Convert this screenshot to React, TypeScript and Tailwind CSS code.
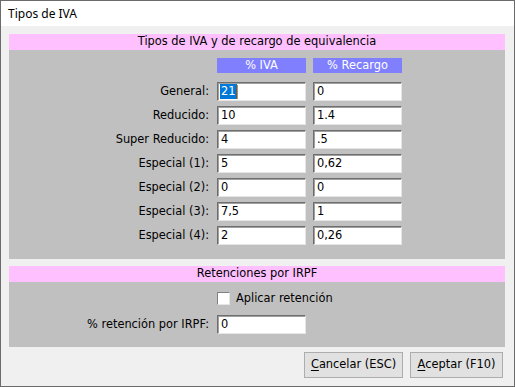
import React from "react";

const FONT = { fontFamily: '"DejaVu Sans", Verdana, sans-serif' };

const rows: { label: string; iva: string; rec: string }[] = [
  { label: "General:", iva: "21", rec: "0" },
  { label: "Reducido:", iva: "10", rec: "1.4" },
  { label: "Super Reducido:", iva: "4", rec: ".5" },
  { label: "Especial (1):", iva: "5", rec: "0,62" },
  { label: "Especial (2):", iva: "0", rec: "0" },
  { label: "Especial (3):", iva: "7,5", rec: "1" },
  { label: "Especial (4):", iva: "2", rec: "0,26" },
];

const Field = ({ value, selected }: { value: string; selected?: boolean }) => (
  <div className="flex h-[19px] w-[89px] items-center border border-b-[#e6e6e6] border-l-[#6e6e6e] border-r-[#e6e6e6] border-t-[#6e6e6e] bg-white pl-[2px] shadow-[inset_1px_1px_0_#a0a0a0] text-[11.4px] leading-none text-black">
    {selected ? (
      <>
        <span className="bg-[#0078d7] px-[1px] py-[2px] text-white">{value}</span>
        <span className="h-[14px] w-[1px] bg-[#ff7f00]" />
      </>
    ) : (
      <span className="pl-[1px]">{value}</span>
    )}
  </div>
);

const SectionTitle = ({ children }: { children: React.ReactNode }) => (
  <div className="flex h-[16px] items-center justify-center bg-[#ffc0ff] text-[11.4px] leading-none text-black">
    {children}
  </div>
);

const Button = ({ first, rest, w }: { first: string; rest: string; w: string }) => (
  <button
    className={`flex h-[26px] items-center justify-center border border-[#adadad] bg-[#e1e1e1] text-[11.4px] leading-none text-black ${w}`}
  >
    <span className="underline underline-offset-2">{first}</span>
    {rest}
  </button>
);

export default function App() {
  return (
    <div className="h-[387px] w-[515px] overflow-hidden" style={FONT}>
      <div className="flex h-full w-full flex-col border border-[#6b6b6b] bg-[#f0f0f0]">
        <div
          className="flex h-[25px] items-center bg-white pl-[7px] text-[12px] text-black"
          style={{ fontFamily: '"Noto Sans", "Open Sans", sans-serif' }}
        >
          Tipos de IVA
        </div>

        <div className="ml-[8px] mt-[8px] w-[496px]">
          <SectionTitle>Tipos de IVA y de recargo de equivalencia</SectionTitle>
          <div className="flex flex-col gap-[5px] bg-[#c0c0c0] pb-[14px] pt-[8px]">
            <div className="mb-[4px] flex">
              <div className="w-[208px]" />
              <div className="flex h-[15px] w-[89px] items-center justify-center bg-[#8080ff] text-[11.4px] leading-none text-white">
                % IVA
              </div>
              <div className="ml-[7px] flex h-[15px] w-[89px] items-center justify-center bg-[#8080ff] text-[11.4px] leading-none text-white">
                % Recargo
              </div>
            </div>
            {rows.map((r, i) => (
              <div key={r.label} className="flex items-center">
                <div className="w-[208px] pr-[8px] text-right text-[11.4px] leading-none text-black">
                  {r.label}
                </div>
                <Field value={r.iva} selected={i === 0} />
                <div className="ml-[7px]">
                  <Field value={r.rec} />
                </div>
              </div>
            ))}
          </div>
        </div>

        <div className="ml-[8px] mt-[7px] w-[496px]">
          <SectionTitle>Retenciones por IRPF</SectionTitle>
          <div className="flex h-[65px] flex-col bg-[#c0c0c0] pt-[10px]">
            <div className="flex items-center">
              <div className="w-[208px]" />
              <div className="h-[13px] w-[13px] border border-b-[#e6e6e6] border-l-[#808080] border-r-[#e6e6e6] border-t-[#808080] bg-white" />
              <span className="ml-[6px] text-[11.4px] leading-none text-black">Aplicar retención</span>
            </div>
            <div className="mt-[10px] flex items-center">
              <div className="w-[208px] pr-[8px] text-right text-[11.4px] leading-none text-black">
                % retención por IRPF:
              </div>
              <Field value="0" />
            </div>
          </div>
        </div>

        <div className="mr-[11px] mt-[5px] flex justify-end gap-[7px]">
          <Button first="C" rest="ancelar (ESC)" w="w-[99px]" />
          <Button first="A" rest="ceptar (F10)" w="w-[93px]" />
        </div>
      </div>
    </div>
  );
}
